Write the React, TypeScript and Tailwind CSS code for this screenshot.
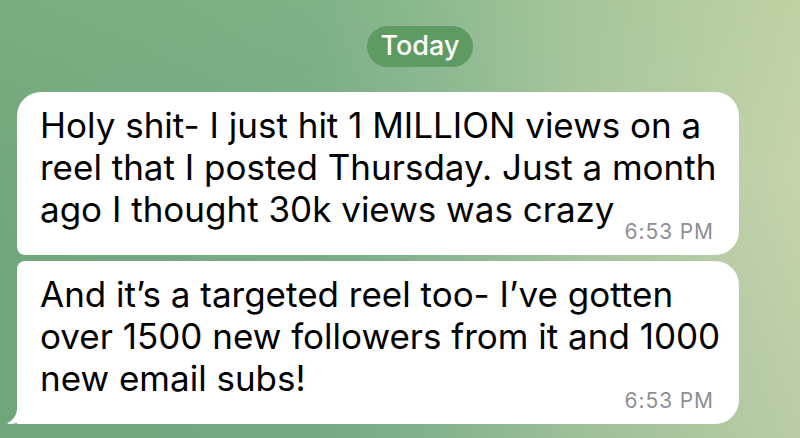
import React from 'react';

const messages = [
  {
    id: 1,
    lines: ['Holy shit- I just hit 1 MILLION views on a', 'reel that I posted Thursday. Just a month', 'ago I thought 30k views was crazy'],
    time: '6:53 PM',
    tail: false,
  },
  {
    id: 2,
    lines: ['And it\u2019s a targeted reel too- I\u2019ve gotten', 'over 1500 new followers from it and 1000', 'new email subs!'],
    time: '6:53 PM',
    tail: true,
  },
];

const Tail = () => (
  <svg width="26" height="22" viewBox="0 0 26 22" className="absolute -left-[10px] bottom-0" fill="#ffffff">
    <path d="M10 0 L10 6 C10 13 6 18.5 0.5 21 Q0 22 2 22 C7 22 11 21 14 19 C16.5 20.8 19 22 26 22 L26 0 Z" />
  </svg>
);

export default function App() {
  return (
    <div
      className="w-[800px] h-[438px] overflow-hidden bg-[linear-gradient(90deg,#72a77d_0%,#79ac88_40%,#8ab792_55%,#a7c59f_72%,#c6d4ac_100%)]"
      style={{ fontFamily: 'Inter, "Noto Sans", sans-serif' }}
    >
      <div className="w-full h-full bg-[linear-gradient(180deg,rgba(160,200,130,0.18)_0%,rgba(255,255,255,0)_40%,rgba(90,150,110,0.12)_100%)]">
        <div className="flex pt-[26px]">
          <div className="ml-[367px] h-[41px] w-[106px] rounded-full bg-[#5e9b63] flex items-center justify-center text-white text-[27px] font-medium">
            Today
          </div>
        </div>

        <div className="flex flex-col gap-[6px] mt-[25px] ml-[17px]">
          {messages.map((m, i) => (
            <div
              key={m.id}
              className={
                'relative w-[722px] bg-white pl-[23px] pr-[25px] pt-3 pb-[11px] rounded-r-[24px] ' +
                (i === 0 ? 'rounded-tl-[24px] rounded-bl-[8px]' : 'rounded-tl-[8px] rounded-bl-none')
              }
            >
              <div className="text-[35px] leading-[42px] text-black whitespace-nowrap">
                {m.lines.map((l, j) => (
                  <div key={j}>{l}</div>
                ))}
              </div>
              <div className="flex justify-end -mt-[10px]">
                <span className="text-[21px] leading-[24px] text-[#8e8e93] tracking-[0.9px]">{m.time}</span>
              </div>
              {m.tail && <Tail />}
            </div>
          ))}
        </div>
      </div>
    </div>
  );
}
